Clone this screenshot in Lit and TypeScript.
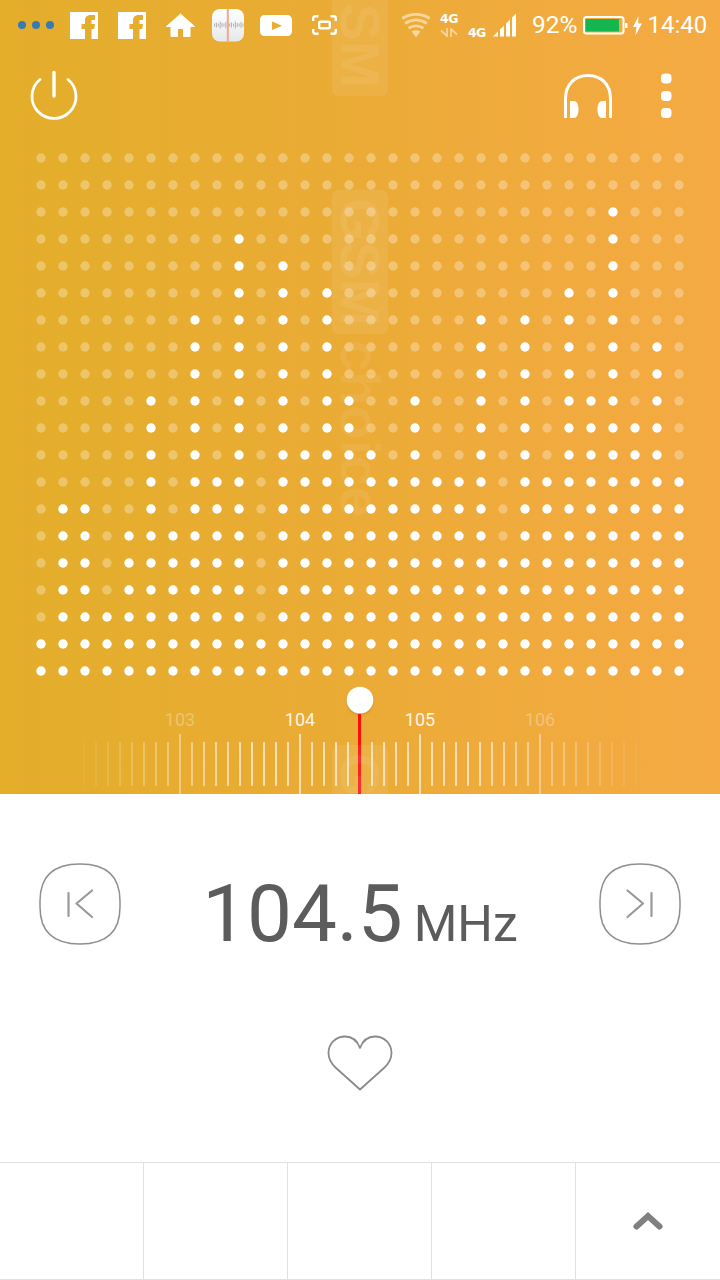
import { LitElement, html, css, svg } from "lit";
import { customElement } from "lit/decorators.js";

const COL_TOPS = [18,13,13,17,14,9,14,6,12,3,18,4,11,5,9,11,12,9,12,12,6,15,6,12,5,9,2,10,7,12];

@customElement("app-root")
export class AppRoot extends LitElement {
  static styles = css`
    :host { display: block; width: 720px; height: 1280px; background: #fff; overflow: hidden; font-family: Roboto, "Liberation Sans", sans-serif; }
    svg { display: block; flex: none; }
    .hero { position: relative; height: 794px; overflow: hidden; color: #fff; background: linear-gradient(90deg, #e3ae2a 0%, #ebab36 50%, #f5aa44 100%); }
    .status { display: flex; align-items: center; height: 50px; padding-left: 18px; }
    .g16 { margin-left: 16px; } .g17 { margin-left: 17px; } .g20 { margin-left: 20px; }
    .g6 { margin-left: 6px; } .g5 { margin-left: 5px; }
    .wifi { margin-left: 65px; }
    .net { display: flex; flex-direction: column; align-items: center; width: 18px; gap: 4px; margin-left: 10px; }
    .fourg { font: bold 12.5px/10px "DejaVu Sans", sans-serif; letter-spacing: -0.6px; white-space: nowrap; }
    .fourg.low { margin: 15px 0 0 10px; width: 18px; }
    .pct { font-size: 24.5px; line-height: 50px; margin-left: 16px; }
    .time { font-size: 24px; line-height: 50px; margin-left: 5px; }
    .toolbar { display: flex; height: 94px; padding: 20px 0 0 30px; box-sizing: border-box; }
    .toolbar .phones { margin-left: auto; }
    .toolbar .more { margin: 0 48px 0 47px; }
    .wm { position: absolute; left: 332px; writing-mode: vertical-rl; font: bold 56px/56px "Liberation Sans", sans-serif; color: rgba(255,255,255,.07); white-space: nowrap; }
    .wm b { display: inline-block; padding: 8px 0; background: rgba(255,255,255,.08); border-radius: 7px; }
    .wm em { font-style: normal; margin-top: 6px; display: inline-block; }
    .wm.a { top: -48px; } .wm.b { top: 190px; } .wm.c { top: 745px; }
    .tune { display: flex; justify-content: space-between; padding: 69px 39px 0 39px; height: 81px; }
    .freq { display: flex; align-items: baseline; color: #5c5c5c; line-height: 81px; margin-top: 11px; }
    .freq .n { font-size: 80px; letter-spacing: -0.1px; }
    .freq .u { font-size: 50px; margin-left: 11px; }
    .fav { display: flex; justify-content: center; padding-top: 91px; height: 127px; }
    .nav { display: grid; grid-template-columns: repeat(5, 144px); height: 118px; box-sizing: border-box; border-top: 1px solid #e0e0e0; border-bottom: 1px solid #e0e0e0; }
    .nav div { border-right: 1px solid #e0e0e0; display: flex; align-items: center; justify-content: center; }
    .nav div:last-child { border-right: 0; }
  `;

  private fb(cls: string) {
    return html`<svg class=${cls} width="28" height="27" viewBox="0 0 28 27"><path fill="#fff" fill-rule="evenodd" d="M0 0H28V27H0ZM15 27V17H11.5V12H15V8.5C15 4.5 17.5 3 21 3H25V8H22.5C21.7 8 21.5 8.4 21.5 9V12H25L24.2 17H21.5V27Z"/></svg>`;
  }

  private radioIcon() {
    const hs = [3,5,3,7,4,3,6,3,3,5,3,7,4,3,6,3];
    const xs = hs.map((_, i) => 2 + i * 1.9);
    return html`<svg class="g17" width="32" height="33" viewBox="0 0 32 33">
      <defs><linearGradient id="ri" x1="0" y1="0" x2="0" y2="1"><stop offset="0" stop-color="#fff"/><stop offset="1" stop-color="#e6e8ea"/></linearGradient></defs>
      <rect width="32" height="32.5" rx="8" fill="url(#ri)"/>
      ${hs.map((h, i) => svg`<rect x=${xs[i]} y=${16 - h / 2} width="0.9" height=${h} fill="#a9abb0"/>`)}
      <rect x="14.8" width="2" height="32.5" fill="#f5a68c"/>
    </svg>`;
  }

  private dots() {
    const out = [];
    for (let r = 0; r < 20; r++) {
      for (let c = 0; c < 30; c++) {
        const lit = r >= COL_TOPS[c];
        out.push(svg`<circle cx=${41 + 22 * c} cy=${14 + 27 * r} r="4.7" fill=${lit ? "#fff" : "rgba(255,255,255,.3)"}/>`);
      }
    }
    return html`<svg width="720" height="540" viewBox="0 0 720 540">${out}</svg>`;
  }

  private ruler() {
    const out = [];
    for (let k = -23; k <= 23; k++) {
      if (k === 0) continue;
      const x = 360 + 12 * k;
      const d = Math.abs(x - 360);
      const a = Math.max(0, Math.min(0.62, ((290 - d) / 180) * 0.62));
      const major = Math.abs(k) % 10 === 5;
      const y = major ? 50 : 58;
      const h = major ? 60 : 44;
      out.push(svg`<rect x=${x - 1} y=${y} width="2" height=${h} fill="#fff" fill-opacity=${a.toFixed(3)}/>`);
    }
    const labels: [string, number, number][] = [["103", 180, 0.3], ["104", 300, 0.9], ["105", 420, 0.9], ["106", 540, 0.3]];
    return html`<svg width="720" height="110" viewBox="0 0 720 110">
      <defs><filter id="ks" x="-30%" y="-30%" width="160%" height="160%"><feDropShadow dx="0" dy="1" stdDeviation="1" flood-color="#8a6a20" flood-opacity=".45"/></filter></defs>
      ${out}
      ${labels.map(([t, x, o]) => svg`<text x=${x} y="42" text-anchor="middle" font-family="Roboto, sans-serif" font-size="18" fill="#fff" fill-opacity=${o}>${t}</text>`)}
      <rect x="358" y="30" width="3" height="80" fill="#ff0d0d"/>
      <circle cx="360" cy="16" r="13.3" fill="#fff" filter="url(#ks)"/>
    </svg>`;
  }

  render() {
    return html`
      <section class="hero">
        <header class="status">
          <svg width="36" height="10" viewBox="0 0 36 10"><g fill="#3a7ab2"><circle cx="4" cy="5" r="4"/><circle cx="18" cy="5" r="4"/><circle cx="32" cy="5" r="4"/></g></svg>
          ${this.fb("g16")}
          ${this.fb("g20")}
          <svg class="g20" width="29" height="24" viewBox="0 0 29 24"><path fill="#fff" stroke="#fff" stroke-width="1" stroke-linejoin="round" d="M14.5 1L28.5 13.5H24V23.5H17.5V15.5H11.5V23.5H5V13.5H.5Z"/></svg>
          ${this.radioIcon()}
          <svg class="g16" width="32" height="21" viewBox="0 0 32 21"><path fill="#fff" fill-rule="evenodd" d="M5 0H27C30 0 32 2 32 5V16C32 19 30 21 27 21H5C2 21 0 19 0 16V5C0 2 2 0 5 0ZM12 6.500V15L22 10.700Z"/></svg>
          <svg class="g20" width="25" height="20" viewBox="0 0 25 20"><g fill="none" stroke="#fff" stroke-width="2.4"><path d="M1.200 6V3.500C1.200 2 2 1.200 3.500 1.200H6.500M18.500 1.200H21.500C23 1.200 23.800 2 23.800 3.500V6M23.800 14V16.500C23.800 18 23 18.800 21.500 18.800H18.500M6.500 18.800H3.500C2 18.800 1.200 18 1.200 16.500V14"/><rect x="7.200" y="6.700" width="10.600" height="6.600" rx="1"/></g></svg>
          <svg class="wifi" width="28" height="25" viewBox="0 0 28 25"><g fill="none" stroke="#fff" stroke-opacity=".5" stroke-width="3"><path d="M.2 5.500A25 25 0 0 1 27.800 5.500"/><path d="M3.100 10.400A19 19 0 0 1 24.900 10.400"/><path d="M6.500 15.300A13 13 0 0 1 21.500 15.300"/></g><path fill="#fff" fill-opacity=".5" d="M14 24.500L9.500 18.500A8 8 0 0 1 18.500 18.500Z"/></svg>
          <div class="net">
            <span class="fourg">4G</span>
            <svg width="18" height="9" viewBox="0 0 18 9"><path fill="none" stroke="#fff" stroke-opacity=".5" stroke-width="1.800" d="M7 0V8L1 2.500M11 9V1L17 6.500"/></svg>
          </div>
          <span class="fourg low">4G</span>
          <svg class="g6" width="24" height="24" viewBox="0 0 24 24"><path fill="#fff" d="M1 23.500L6 18.500V23.500ZM8 16.500L12 12.500V23.500H8ZM14 10.500L18 6.500V23.500H14ZM20 4.500L24 .5V23.500H20Z"/></svg>
          <span class="pct">92%</span>
          <svg class="g6" width="45" height="19" viewBox="0 0 45 19"><rect x="1" y="1" width="39.500" height="16.500" rx="2.500" fill="none" stroke="#fff" stroke-width="2"/><rect x="2.500" y="3" width="33.500" height="12.500" fill="#14b650"/><rect x="42" y="7" width="2.500" height="5" fill="#fff"/></svg>
          <svg class="g5" width="9" height="19" viewBox="0 0 9 19"><path fill="#fff" d="M5.500 0L0 11H3.500L2.500 19L9 7.500H5.200Z"/></svg>
          <span class="time">14:40</span>
        </header>
        <div class="toolbar">
          <svg width="48" height="52" viewBox="0 0 48 52"><g fill="none" stroke="#fff" stroke-linecap="round"><path stroke-width="2.800" d="M10 9.500A22 22 0 1 0 38 9.500"/><path stroke-width="3.400" d="M24 2.500V26"/></g></svg>
          <svg class="phones" width="50" height="52" viewBox="0 0 50 52"><path fill="none" stroke="#fff" stroke-width="3" d="M2.500 48V29C2.500 14 12 5.500 25 5.500S47.500 14 47.500 29V48"/><path fill="#fff" d="M7 31H11C14 31 15.500 35 15.500 39.500S14 48 11 48H7ZM43 31H39C36 31 34.500 35 34.500 39.500S36 48 39 48H43Z"/></svg>
          <svg class="more" width="12" height="52" viewBox="0 0 12 52"><g fill="#fff"><rect x="1" y="3.500" width="10.500" height="10" rx="4"/><rect x="1" y="21" width="10.500" height="10" rx="4"/><rect x="1" y="38" width="10.500" height="10" rx="4"/></g></svg>
        </div>
        ${this.dots()}
        ${this.ruler()}
        <div class="wm a"><b>GSM</b></div>
        <div class="wm b"><b>GSM</b><em>choice</em></div>
        <div class="wm c"><b>GSM</b></div>
      </section>
      <section class="tune">
        <svg width="82" height="82" viewBox="0 0 82 82"><path fill="none" stroke="#8f8f8f" stroke-width="1.500" d="M41 1C67 1 81 13 81 38V44C81 69 67 81 41 81S1 69 1 44V38C1 13 15 1 41 1Z"/><path fill="none" stroke="#999" stroke-width="2.200" stroke-linecap="round" stroke-linejoin="round" d="M29.500 30V53M53 27.500L37.500 40.500L53 54"/></svg>
        <div class="freq"><span class="n">104.5</span><span class="u">MHz</span></div>
        <svg width="82" height="82" viewBox="0 0 82 82"><path fill="none" stroke="#8f8f8f" stroke-width="1.500" d="M41 1C67 1 81 13 81 38V44C81 69 67 81 41 81S1 69 1 44V38C1 13 15 1 41 1Z"/><path fill="none" stroke="#999" stroke-width="2.200" stroke-linecap="round" stroke-linejoin="round" d="M52.500 30V53M28.500 27.500L44 40.500L28.500 54"/></svg>
      </section>
      <section class="fav">
        <svg width="66" height="56" viewBox="0 0 66 56"><path fill="none" stroke="#8a8a8a" stroke-width="1.800" stroke-linejoin="round" d="M33 54.500L9 33C3.500 28 1.500 23 1.500 18C1.500 8.500 9 1.500 18 1.500C24.500 1.500 30 5 33 13C36 5 41.500 1.500 48 1.500C57 1.500 64.500 8.500 64.500 18C64.500 23 62.500 28 57 33Z"/></svg>
      </section>
      <nav class="nav">
        <div></div><div></div><div></div><div></div>
        <div><svg width="34" height="22" viewBox="0 0 34 22"><path fill="none" stroke="#808080" stroke-width="6" stroke-linecap="round" stroke-linejoin="miter" d="M5.500 16.500L17 6L28.500 16.500"/></svg></div>
      </nav>
    `;
  }
}
